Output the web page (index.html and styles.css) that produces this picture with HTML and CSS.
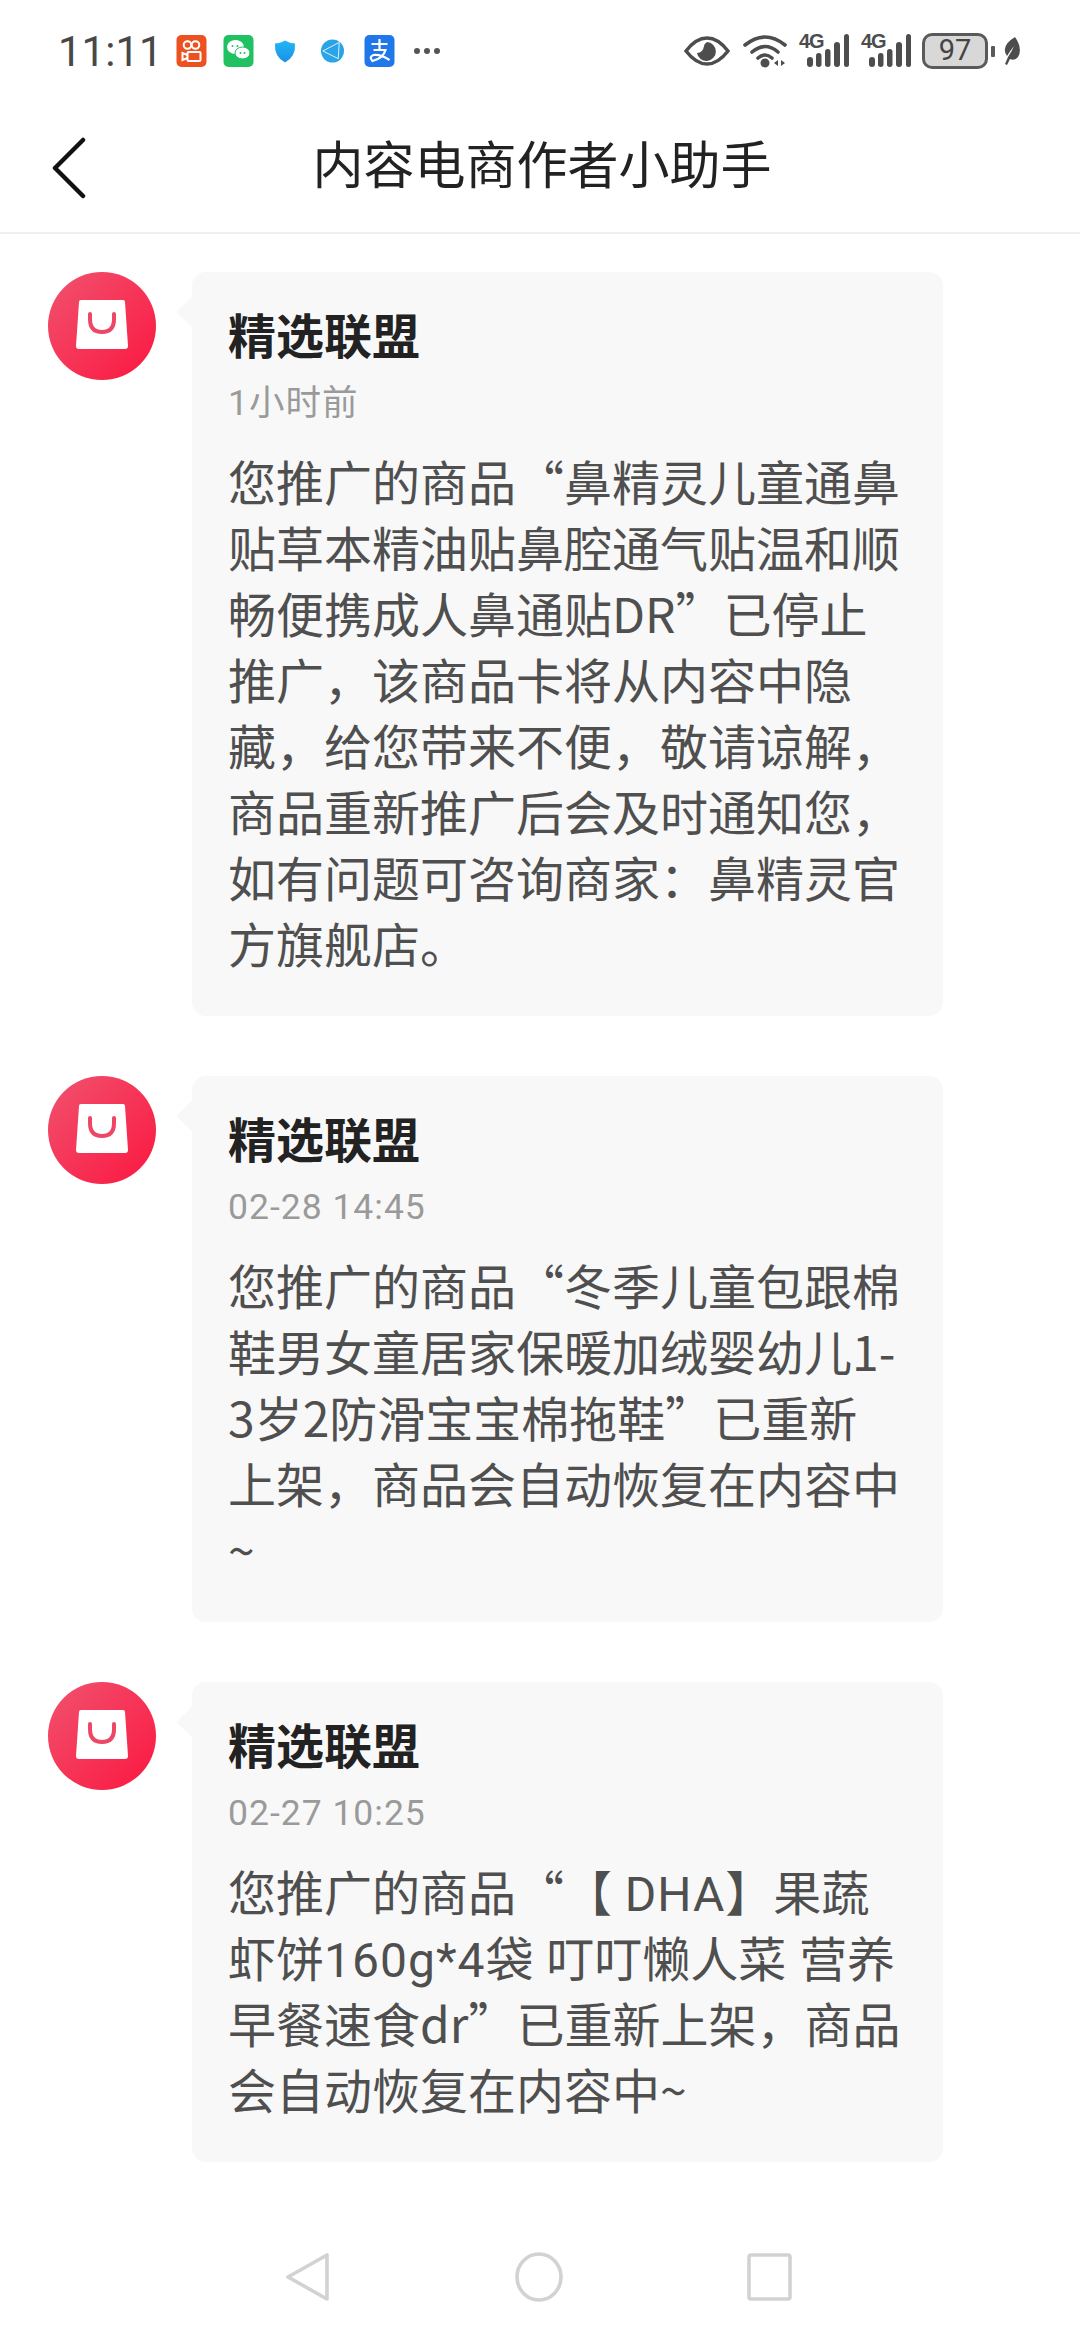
FILE: index.html
```html
<!DOCTYPE html>
<html>
	<head>
		<meta charset="utf-8">
		<meta name="viewport" content="width=device-width, initial-scale=1.0">
		<link rel="stylesheet" href="styles.css">
	</head>
	<body>
		<svg class="defs" width="0" height="0">
			<defs>
				<linearGradient id="red" x1="0" y1="0" x2="1" y2="1">
					<stop offset="0" stop-color="#f1526f"/>
					<stop offset="1" stop-color="#fb1740"/>
				</linearGradient>
				<linearGradient id="blue" x1="0" y1="0" x2="0" y2="1">
					<stop offset="0" stop-color="#1fb8f5"/>
					<stop offset="1" stop-color="#1d8fe8"/>
				</linearGradient>
				<symbol id="bag" viewBox="0 0 108 108">
					<circle cx="54" cy="54" r="54" fill="url(#red)"/>
					<path d="M33 28H75Q77 28 77 30L80 74Q80 77 77 77H31Q28 77 28 74L31 30Q31 28 33 28Z" fill="#fff"/>
					<path d="M42 42V47Q42 60 54 60Q66 60 66 47V42" fill="none" stroke="#ee4766" stroke-width="4" stroke-linecap="round"/>
				</symbol>
				<symbol id="signal" viewBox="0 0 50 34">
					<rect x="8" y="23" width="6" height="10" rx="3"/>
					<rect x="17" y="19" width="5.500" height="14" rx="2.700"/>
					<rect x="26" y="15" width="5.500" height="18" rx="2.700"/>
					<rect x="35" y="8" width="6" height="25" rx="3"/>
					<rect x="45" y="0" width="5" height="33" rx="2.500"/>
				</symbol>
			</defs>
		</svg>

		<header class="status-bar">
			<div class="clock">11:11</div>
			<div class="notify">
				<svg class="app" viewBox="0 0 30 32"><rect width="30" height="32" rx="5" fill="#ee5120"/><circle cx="11" cy="10" r="3.800" fill="none" stroke="#fff" stroke-width="2"/><circle cx="19" cy="10" r="3.800" fill="none" stroke="#fff" stroke-width="2"/><rect x="11" y="17" width="13" height="9" rx="1" fill="none" stroke="#fff" stroke-width="2"/><path d="M11 20L6 18V25L11 23" fill="none" stroke="#fff" stroke-width="2"/></svg>
				<svg class="app app-chat" viewBox="0 0 30 32"><rect width="30" height="32" rx="5" fill="#1fc160"/><ellipse cx="12" cy="12" rx="8.500" ry="7" fill="#fff"/><ellipse cx="19" cy="18" rx="7.500" ry="6" fill="#fff" stroke="#1fc160"/><circle cx="9" cy="11" r="1" fill="#1fc160"/><circle cx="14" cy="11" r="1" fill="#1fc160"/><circle cx="17" cy="18" r="1" fill="#1fc160"/><circle cx="21" cy="18" r="1" fill="#1fc160"/></svg>
				<svg class="app-shield" viewBox="0 0 22 22"><path d="M11 0Q16 3 21 3Q22 16 11 22Q0 16 1 3Q6 3 11 0Z" fill="url(#blue)"/></svg>
				<svg class="app-globe" viewBox="0 0 24 24"><circle cx="12" cy="12" r="12" fill="#2aa4e6"/><path d="M2 12L19 3M2 12L18 20M19 3L18 20" stroke="#dff3fc" stroke-width="1" fill="none"/></svg>
				<svg class="app app-alipay" viewBox="0 0 30 32"><rect width="30" height="32" rx="5" fill="#1f78ea"/><path d="M7 9H23M15 4V14M9 15H21Q19 23 8 26Q4 22 9 20Q16 19 25 25" fill="none" stroke="#fff" stroke-width="2.200"/></svg>
				<div class="more"><i></i><i></i><i></i></div>
			</div>
			<div class="buffer"></div>
			<div class="sys-icons">
				<svg class="eye" viewBox="0 0 46 30"><path d="M2 15Q12 2 23 2T44 15Q34 28 23 28T2 15Z" fill="none" stroke="#4d4d4d" stroke-width="3.500"/><path d="M23 6A9.500 9.500 0 1 1 13 17Q19 17 20 10Q20 8 23 6Z" fill="#4d4d4d"/></svg>
				<svg class="wifi" viewBox="0 0 46 34"><path d="M2 11Q22 -5 42 11M9 18Q22 7 35 18M15 24Q22 18 29 24" fill="none" stroke="#4d4d4d" stroke-width="3.600" stroke-linecap="round"/><circle cx="22" cy="29" r="4.500" fill="#4d4d4d"/><path d="M35 32V26L31 29ZM38 26V32L42 29Z" fill="#4d4d4d"/></svg>
				<div class="cell"><span>4G</span><svg viewBox="0 0 50 34"><use href="#signal"/></svg></div>
				<div class="cell"><span>4G</span><svg viewBox="0 0 50 34"><use href="#signal"/></svg></div>
				<div class="battery"><div class="battery-body">97</div><div class="battery-tip"></div></div>
				<svg class="leaf" viewBox="0 0 18 28"><path d="M12 0Q20 12 15 20Q12 24 7 22L4 28L2 27L5 20Q9 14 11 9Q7 14 4 19Q-3 9 12 0Z" fill="#4d4d4d"/></svg>
			</div>
		</header>

		<nav class="navbar">
			<svg class="back" viewBox="0 0 36 64"><path d="M33 4L5 32L33 60" fill="none" stroke="#111" stroke-width="4.500" stroke-linecap="round" stroke-linejoin="round"/></svg>
			<div class="nav-title">内容电商作者小助手</div>
		</nav>

		<main class="msg-list">
			<div class="msg">
				<svg class="avatar"><use href="#bag"/></svg>
				<div class="bubble">
					<div class="msg-title">精选联盟</div>
					<div class="msg-time">1小时前</div>
					<div class="msg-body">您推广的商品“鼻精灵儿童通鼻<br>贴草本精油贴鼻腔通气贴温和顺<br>畅便携成人鼻通贴DR”已停止<br>推广，该商品卡将从内容中隐<br>藏，给您带来不便，敬请谅解，<br>商品重新推广后会及时通知您，<br>如有问题可咨询商家：鼻精灵官<br>方旗舰店。</div>
				</div>
			</div>
			<div class="msg">
				<svg class="avatar"><use href="#bag"/></svg>
				<div class="bubble">
					<div class="msg-title">精选联盟</div>
					<div class="msg-time">02-28 14:45</div>
					<div class="msg-body">您推广的商品“冬季儿童包跟棉<br>鞋男女童居家保暖加绒婴幼儿1-<br>3岁2防滑宝宝棉拖鞋”已重新<br>上架，商品会自动恢复在内容中<br>~</div>
				</div>
			</div>
			<div class="msg">
				<svg class="avatar"><use href="#bag"/></svg>
				<div class="bubble">
					<div class="msg-title">精选联盟</div>
					<div class="msg-time">02-27 10:25</div>
					<div class="msg-body">您推广的商品“【 <span class="latin">DHA</span>】果蔬<br>虾饼<span class="latin">160g*4</span>袋 叮叮懒人菜 营养<br>早餐速食dr”已重新上架，商品<br>会自动恢复在内容中~</div>
				</div>
			</div>
		</main>

		<footer class="nav-keys">
			<svg class="key" viewBox="0 0 48 50"><path d="M4 25L43 3V47Z" fill="none" stroke="#d2d2d2" stroke-width="3.600" stroke-linejoin="round"/></svg>
			<svg class="key" viewBox="0 0 48 50"><ellipse cx="24" cy="25" rx="22" ry="23" fill="none" stroke="#d2d2d2" stroke-width="3.600"/></svg>
			<svg class="key" viewBox="0 0 48 50"><rect x="3" y="3" width="41" height="44" rx="2" fill="none" stroke="#d2d2d2" stroke-width="3.600"/></svg>
		</footer>
	</body>
</html>
```

FILE: styles.css
```css
* {
	margin:0;
	padding:0;
	box-sizing:border-box;
}
body {
	width:1080px;
	height:2340px;
	overflow:hidden;
	background-color:#fff;
	font-family:"Noto Sans CJK SC", "Noto Sans", sans-serif;
	color:#4f4f4f;
	text-spacing-trim:space-all;
}
.defs {
	display:block;
	height:0;
}
.status-bar {
	display:flex;
	align-items:center;
	height:100px;
	padding:2px 0 0 58px;
}
.clock {
	font-family:"Roboto", sans-serif;
	font-size:42px;
	color:#484848;
	width:118px;
}
.notify {
	display:flex;
	align-items:center;
}
.notify .app {
	width:31px;
	height:32px;
	margin-right:16px;
}
.notify .app-chat {
	margin-right:20px;
}
.notify .app-shield {
	width:22px;
	height:23px;
	margin-right:25px;
}
.notify .app-globe {
	width:23px;
	height:24px;
	margin-right:20px;
}
.notify .app-alipay {
	margin-right:19px;
}
.more {
	display:flex;
	gap:4px;
}
.more i {
	width:6px;
	height:6px;
	border-radius:50%;
	background-color:#555;
}
.buffer {
	flex:auto;
}
.sys-icons {
	display:flex;
	align-items:center;
	padding-right:59px;
}
.eye {
	width:46px;
	height:30px;
	margin-right:13px;
}
.wifi {
	width:46px;
	height:34px;
	margin-right:10px;
}
.cell {
	position:relative;
	width:50px;
	height:34px;
	margin-right:12px;
	fill:#4d4d4d;
}
.cell svg {
	display:block;
	width:50px;
	height:34px;
}
.cell span {
	position:absolute;
	left:0;
	top:-3px;
	font-family:"Liberation Sans", sans-serif;
	font-size:20px;
	font-weight:bold;
	line-height:20px;
	letter-spacing:-1px;
	color:#4d4d4d;
}
.battery {
	display:flex;
	align-items:center;
	margin-left:-1px;
}
.battery-body {
	width:66px;
	height:36px;
	border:3px solid #5a5a5a;
	border-radius:10px;
	background-color:#d8d8d8;
	font-family:"Roboto", sans-serif;
	font-size:29px;
	line-height:29px;
	text-align:center;
	color:#444;
}
.battery-tip {
	width:4px;
	height:11px;
	margin-left:3px;
	background-color:#5a5a5a;
	border-radius:1px;
}
.leaf {
	width:18px;
	height:28px;
	margin-left:8px;
}
.navbar {
	position:relative;
	display:flex;
	align-items:center;
	justify-content:center;
	height:134px;
	border-bottom:2px solid #f0f0f0;
	padding:0 0 8px 0;
}
.back {
	position:absolute;
	left:50px;
	top:36px;
	width:36px;
	height:64px;
}
.nav-title {
	font-size:51px;
	color:#222;
	margin-left:4px;
}
.msg-list {
	display:flex;
	flex-direction:column;
	gap:60px;
	padding:38px 0 0 48px;
}
.msg {
	display:flex;
	align-items:flex-start;
}
.avatar {
	flex:none;
	width:108px;
	height:108px;
}
.bubble {
	position:relative;
	width:751px;
	margin-left:36px;
	padding:29px 30px 41px 36px;
	background-color:#f8f8f8;
	border-radius:14px;
}
.bubble::before {
	content:"";
	position:absolute;
	left:-11px;
	top:29px;
	width:22px;
	height:22px;
	background-color:#f8f8f8;
	transform:rotate(45deg);
}
.msg-title {
	position:relative;
	font-size:48px;
	font-weight:bold;
	line-height:64px;
	color:#222;
}
.msg-time {
	font-family:"Roboto", "Noto Sans CJK SC", sans-serif;
	font-size:35.5px;
	line-height:50px;
	margin-top:13px;
	letter-spacing:1px;
	color:#9a9a9a;
}
.msg-body {
	font-size:48px;
	line-height:66px;
	margin-top:19px;
	color:#4f4f4f;
	white-space:nowrap;
	word-spacing:2px;
}
.msg-body .latin {
	font-family:"Roboto", sans-serif;
	line-height:1;
	letter-spacing:1px;
}
.nav-keys {
	position:absolute;
	left:0;
	top:2252px;
	width:1080px;
	display:flex;
	justify-content:space-between;
	padding:0 286px 0 284px;
}
.key {
	width:48px;
	height:50px;
}
```
